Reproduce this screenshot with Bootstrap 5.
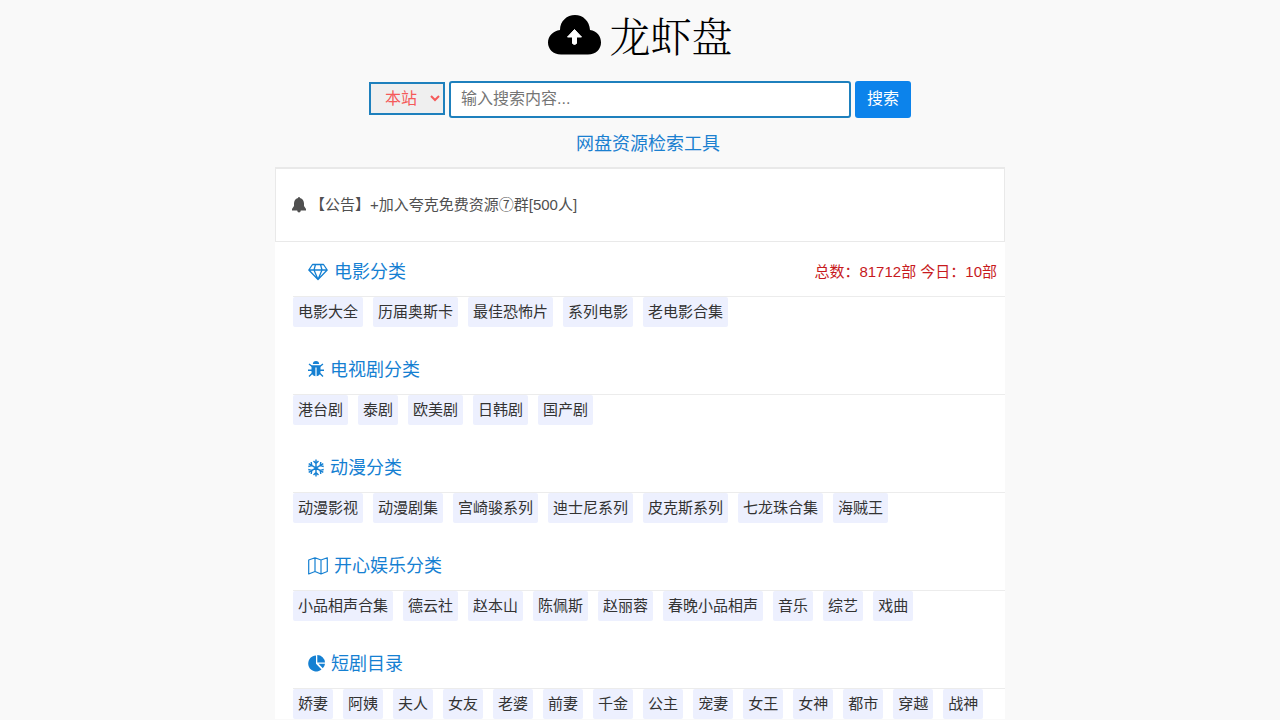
<!DOCTYPE html>
<html lang="zh-CN">
<head>
<meta charset="utf-8">
<meta name="viewport" content="width=device-width, initial-scale=1">
<title>龙虾盘</title>
<link href="https://cdn.jsdelivr.net/npm/bootstrap@5.3.0/dist/css/bootstrap.min.css" rel="stylesheet">
<style>
  body { background: #f9f9f9; color: #333; font-family: "Liberation Sans", "Noto Sans CJK SC", sans-serif; font-size: 15px; line-height: 20px; }
  a { text-decoration: none; }
  .page { max-width: 730px; }
  .brand { height: 69px; color: #000; }
  .brand-name { font-family: "Noto Serif CJK SC", "Noto Sans CJK SC", sans-serif; font-size: 41px; font-weight: 300; line-height: 60px; }
  .search { padding-top: 12px; gap: 4px; }
  .search-scope { width: 76px; height: 33px; margin-top: 1px; border: 2px solid #1e80bd; border-radius: 0; background: #efefef; color: #f55a5a; font-size: 16px; padding: 0 0 0 10px; }
  .search-text { width: 402px; height: 37px; border: 2px solid #1e80bd; border-radius: 3px; background: #fff; font-size: 16px; padding: 0 10px 2px; min-width: 0; }
  .search-text::placeholder { color: #757575; }
  .search-go { width: 56px; height: 37px; border: 0; border-radius: 3px; background: #0c83eb; color: #fff; font-size: 16px; line-height: 24px; padding: 0 0 2px; }
  .search-go:hover { background: #0a70ca; color: #fff; }
  .tagline { height: 49px; padding: 2px 0 0 16px; font-size: 18px; color: #1b80d0; }
  .notice { height: 75px; border: 1px solid #e9e9e9; border-top-width: 2px; padding: 0 16px; color: #505050; gap: 4px; }
  .sections { padding: 6px 0 0 18px; }
  .section-head { height: 49px; padding: 0 8px 0 15px; border-bottom: 1px solid #ececec; }
  .section-title { font-size: 18px; line-height: 24px; color: #1580d2; gap: 6px; }
  .totals { color: #c71a1d; font-family: "Liberation Sans", "Noto Sans CJK TC", sans-serif; }
  .tags { gap: 10px; margin-bottom: 19px; }
  .tag { background: #edf0fe; color: #333; border-radius: 2px; padding: 5px; }
  .tag:hover { color: #0c83eb; }
</style>
</head>
<body>
<div class="page container-fluid p-0">
  <header>
    <a class="brand d-flex justify-content-center align-items-center gap-2" href="#">
      <svg width="54" height="40" viewBox="0 0 54 40" aria-hidden="true"><path fill="currentColor" d="M13 39.500C5 39.500 0 34 0 27.500C0 21 5 16 12 15C12 6 19 0 27 0S41.500 6 42 15C49 16 53 21 53 27.500C53 34 48 39.500 40 39.500Z"/><path fill="#fff" stroke="#fff" stroke-width="1" stroke-linejoin="round" d="M26.500 14.500L33.500 22H28.500V28.500Q26.500 30.500 24.500 28.500V22H19.500Z"/></svg>
      <span class="brand-name">龙虾盘</span>
    </a>
    <form class="search d-flex justify-content-center" role="search">
      <select class="search-scope" aria-label="搜索范围"><option>本站</option></select>
      <input class="search-text" type="text" placeholder="输入搜索内容..." aria-label="搜索内容">
      <button class="search-go btn" type="submit">搜索</button>
    </form>
    <p class="tagline d-flex justify-content-center align-items-center mb-0">网盘资源检索工具</p>
  </header>
  <main class="bg-white">
    <div class="notice d-flex align-items-center">
      <svg width="14" height="16" viewBox="0 0 14 16" fill="currentColor" aria-hidden="true"><path d="M7 0Q8 0 8 1C10.700 1.700 12 4 12 6.500V9L14 12V13.500H0V12L2 9V6.500C2 4 3.300 1.700 6 1Q6 0 7 0ZM5 13H9Q8.500 15.500 7 15.500T5 13Z"/></svg>
      <span>【公告】+加入夸克免费资源⑦群[500人]</span>
    </div>
    <div class="sections">
      <section>
        <div class="section-head d-flex align-items-center justify-content-between">
          <h2 class="section-title d-flex align-items-center fw-normal mb-0">
            <svg width="20" height="18" viewBox="0 0 20 18" fill="none" stroke="currentColor" stroke-width="1.300" stroke-linejoin="round" aria-hidden="true"><path d="M4.500 1.500H15.500L19.200 7L10 16.500L.8 7ZM.8 7H19.200M6 7L10 16.500L14 7L12.500 1.500M6 7L7.500 1.500"/></svg>
            电影分类</h2>
          <span class="totals">总数：81712部 今日：10部</span>
        </div>
        <div class="tags d-flex flex-wrap">
          <a class="tag" href="#">电影大全</a><a class="tag" href="#">历届奥斯卡</a><a class="tag" href="#">最佳恐怖片</a><a class="tag" href="#">系列电影</a><a class="tag" href="#">老电影合集</a>
        </div>
      </section>
      <section>
        <div class="section-head d-flex align-items-center">
          <h2 class="section-title d-flex align-items-center fw-normal mb-0">
            <svg width="16" height="18" viewBox="0 0 16 18" fill="none" stroke="currentColor" stroke-width="1.400" aria-hidden="true"><path fill="currentColor" stroke="none" d="M4.800 3Q5 0 8 0T11.200 3ZM3.500 4.500H12.500V11Q12 14.700 8.600 15.200V6.500H7.400V15.200Q4 14.700 3.500 11Z"/><path d="M1 3L4 5.200H12L15 3M0 9.200H4M12 9.200H16M1 15.500L4.500 12M15 15.500L11.500 12"/></svg>
            电视剧分类</h2>
        </div>
        <div class="tags d-flex flex-wrap">
          <a class="tag" href="#">港台剧</a><a class="tag" href="#">泰剧</a><a class="tag" href="#">欧美剧</a><a class="tag" href="#">日韩剧</a><a class="tag" href="#">国产剧</a>
        </div>
      </section>
      <section>
        <div class="section-head d-flex align-items-center">
          <h2 class="section-title d-flex align-items-center fw-normal mb-0">
            <svg width="16" height="18" viewBox="0 0 16 18" fill="none" stroke="currentColor" stroke-width="1.400" aria-hidden="true"><path d="M8 .5V17.500M.7 4.700L15.300 13.300M15.300 4.700L.7 13.300M5.500 2L8 4.500L10.500 2M5.500 16L8 13.500L10.500 16M.3 7.500L3.800 6.600L3.200 3M15.700 7.500L12.200 6.600L12.800 3M.3 10.500L3.800 11.400L3.200 15M15.700 10.500L12.200 11.400L12.800 15"/></svg>
            动漫分类</h2>
        </div>
        <div class="tags d-flex flex-wrap">
          <a class="tag" href="#">动漫影视</a><a class="tag" href="#">动漫剧集</a><a class="tag" href="#">宫崎骏系列</a><a class="tag" href="#">迪士尼系列</a><a class="tag" href="#">皮克斯系列</a><a class="tag" href="#">七龙珠合集</a><a class="tag" href="#">海贼王</a>
        </div>
      </section>
      <section>
        <div class="section-head d-flex align-items-center">
          <h2 class="section-title d-flex align-items-center fw-normal mb-0">
            <svg width="20" height="18" viewBox="0 0 20 18" fill="none" stroke="currentColor" stroke-width="1.200" stroke-linejoin="round" aria-hidden="true"><path d="M.7 3L7 .8L13 3L19.300 .8V14.500L13 17L7 14.500L.7 17ZM7 .8V14.500M13 3V17"/></svg>
            开心娱乐分类</h2>
        </div>
        <div class="tags d-flex flex-wrap">
          <a class="tag" href="#">小品相声合集</a><a class="tag" href="#">德云社</a><a class="tag" href="#">赵本山</a><a class="tag" href="#">陈佩斯</a><a class="tag" href="#">赵丽蓉</a><a class="tag" href="#">春晚小品相声</a><a class="tag" href="#">音乐</a><a class="tag" href="#">综艺</a><a class="tag" href="#">戏曲</a>
        </div>
      </section>
      <section>
        <div class="section-head d-flex align-items-center">
          <h2 class="section-title d-flex align-items-center fw-normal mb-0">
            <svg width="17" height="18" viewBox="0 0 17 18" fill="currentColor" aria-hidden="true"><path d="M8 .5V8.800L13.500 14.500A8 8 0 1 1 8 .5ZM9.300 0A8 8 0 0 1 17 7.500H9.300ZM10.500 8.800H17Q16.700 11.500 14.800 13.300Z"/></svg>
            短剧目录</h2>
        </div>
        <div class="tags d-flex flex-wrap">
          <a class="tag" href="#">娇妻</a><a class="tag" href="#">阿姨</a><a class="tag" href="#">夫人</a><a class="tag" href="#">女友</a><a class="tag" href="#">老婆</a><a class="tag" href="#">前妻</a><a class="tag" href="#">千金</a><a class="tag" href="#">公主</a><a class="tag" href="#">宠妻</a><a class="tag" href="#">女王</a><a class="tag" href="#">女神</a><a class="tag" href="#">都市</a><a class="tag" href="#">穿越</a><a class="tag" href="#">战神</a>
        </div>
      </section>
    </div>
  </main>
</div>
<script src="https://cdn.jsdelivr.net/npm/bootstrap@5.3.0/dist/js/bootstrap.bundle.min.js"></script>
</body>
</html>
